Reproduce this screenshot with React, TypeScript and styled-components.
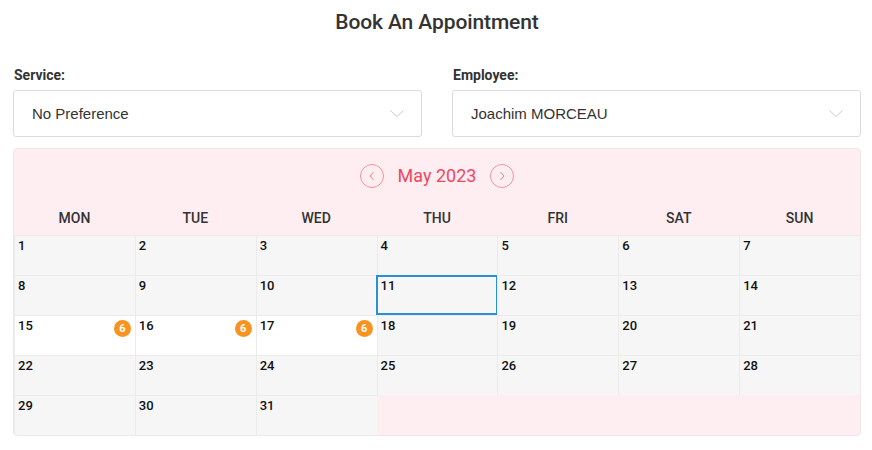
import React from "react";
import styled, { createGlobalStyle } from "styled-components";

const Global = createGlobalStyle`
  html, body { margin: 0; padding: 0; background: #fff; }
  body { font-family: Roboto, "Noto Sans", Arial, sans-serif; color: #333; }
  * { box-sizing: border-box; }
`;

const Page = styled.div`
  width: 872px;
  padding: 10px 11px 0 13px;
`;

const Title = styled.h1`
  margin: 0;
  text-align: center;
  font-size: 21px;
  line-height: 24px;
  font-weight: 500;
  color: #333;
  letter-spacing: -0.1px;
`;

const Fields = styled.div`
  display: grid;
  grid-template-columns: 1fr 1fr;
  column-gap: 30px;
  margin-top: 33px;
`;

const Field = styled.div`
  display: flex;
  flex-direction: column;
`;

const Label = styled.label`
  font-family: Roboto, Arial, sans-serif;
  font-size: 14px;
  line-height: 16px;
  font-weight: 700;
  color: #333;
  padding-left: 1px;
  margin-bottom: 7px;
`;

const Select = styled.div`
  height: 47px;
  border: 1px solid #dcdcdc;
  border-radius: 3px;
  background: #fff;
  display: flex;
  align-items: center;
  justify-content: space-between;
  padding: 0 17px 0 18px;
  font-family: "Liberation Sans", Arial, sans-serif;
  font-size: 15px;
  color: #333;
`;

const Calendar = styled.div`
  margin-top: 11px;
  background: #ffeef1;
  border: 1px solid #f0e6e8;
  border-radius: 4px;
  overflow: hidden;
`;

const Nav = styled.div`
  height: 51px;
  display: flex;
  align-items: center;
  justify-content: center;
  gap: 13px;
  padding-top: 2px;
`;

const NavButton = styled.button`
  width: 24px;
  height: 24px;
  border-radius: 50%;
  border: 1px solid #f5909d;
  background: transparent;
  padding: 0;
  display: flex;
  align-items: center;
  justify-content: center;
  cursor: pointer;
`;

const Month = styled.span`
  font-size: 18px;
  color: #f0465f;
  font-weight: 400;
  margin: 0 1px;
`;

const WeekRow = styled.div`
  display: grid;
  grid-template-columns: repeat(7, 1fr);
  height: 35px;
  align-items: center;
`;

const WeekDay = styled.div`
  text-align: center;
  font-size: 14px;
  font-weight: 500;
  color: #333;
  padding-top: 1px;
`;

const Grid = styled.div`
  display: grid;
  grid-template-columns: repeat(7, 1fr);
  grid-auto-rows: 40px;
`;

const Cell = styled.div<{ $white?: boolean; $empty?: boolean; $selected?: boolean }>`
  position: relative;
  background: ${(p) => (p.$empty ? "transparent" : p.$white ? "#fff" : "#f6f6f6")};
  border-left: 1px solid ${(p) => (p.$empty ? "transparent" : "#ebebeb")};
  border-top: 1px solid ${(p) => (p.$empty ? "transparent" : "#ebebeb")};
  padding: 2px 0 0 3px;
  font-size: 13px;
  line-height: 16px;
  font-weight: 500;
  color: #111;
  ${(p) =>
    p.$selected &&
    `
    &::after {
      content: "";
      position: absolute;
      top: -1px;
      left: -2px;
      right: -1px;
      bottom: 0;
      border: 2px solid #2b90d0;
    }
  `}
`;

const Badge = styled.span`
  position: absolute;
  top: 4px;
  right: 4px;
  width: 17px;
  height: 17px;
  border-radius: 50%;
  background: #f7931e;
  color: #fff;
  font-size: 11px;
  font-weight: 700;
  line-height: 17px;
  text-align: center;
`;

const Chevron = ({ color, size = 14 }: { color: string; size?: number }) => (
  <svg width={size} height={size / 2} viewBox="0 0 14 7" fill="none">
    <path d="M0.5 0.5 L7 6.5 L13.5 0.5" stroke={color} strokeWidth="1" />
  </svg>
);

const Arrow = ({ dir }: { dir: "left" | "right" }) => (
  <svg width="8" height="10" viewBox="0 0 8 10" fill="none">
    <path
      d={dir === "left" ? "M5.5 1 L2 5 L5.5 9" : "M2.5 1 L6 5 L2.5 9"}
      stroke="#f27c8c"
      strokeWidth="1"
    />
  </svg>
);

const weekDays = ["MON", "TUE", "WED", "THU", "FRI", "SAT", "SUN"];
const badges: Record<number, number> = { 15: 6, 16: 6, 17: 6 };

export default function App() {
  const cells: (number | null)[] = [];
  for (let d = 1; d <= 31; d++) cells.push(d);
  while (cells.length < 35) cells.push(null);

  return (
    <>
      <Global />
      <Page>
        <Title>Book An Appointment</Title>
        <Fields>
          <Field>
            <Label>Service:</Label>
            <Select>
              <span>No Preference</span>
              <Chevron color="#c9c9c9" />
            </Select>
          </Field>
          <Field>
            <Label>Employee:</Label>
            <Select>
              <span>Joachim MORCEAU</span>
              <Chevron color="#c9c9c9" />
            </Select>
          </Field>
        </Fields>
        <Calendar>
          <Nav>
            <NavButton aria-label="Previous month">
              <Arrow dir="left" />
            </NavButton>
            <Month>May 2023</Month>
            <NavButton aria-label="Next month">
              <Arrow dir="right" />
            </NavButton>
          </Nav>
          <WeekRow>
            {weekDays.map((w) => (
              <WeekDay key={w}>{w}</WeekDay>
            ))}
          </WeekRow>
          <Grid>
            {cells.map((d, i) =>
              d === null ? (
                <Cell key={i} $empty />
              ) : (
                <Cell key={i} $white={!!badges[d]} $selected={d === 11}>
                  {d}
                  {badges[d] && <Badge>{badges[d]}</Badge>}
                </Cell>
              )
            )}
          </Grid>
        </Calendar>
      </Page>
    </>
  );
}
